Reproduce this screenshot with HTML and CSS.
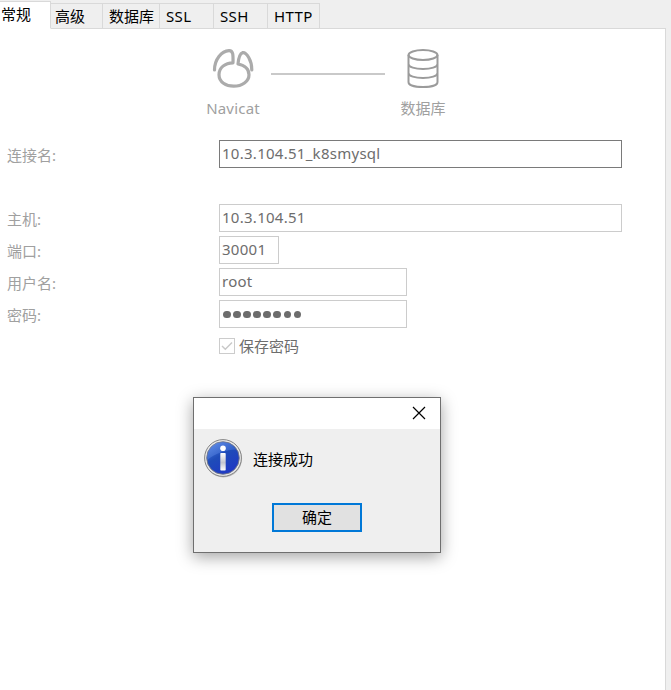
FILE: index.html
```html
<!DOCTYPE html>
<html lang="zh-CN">
<head>
<meta charset="utf-8">
<title>Navicat</title>
<link rel="stylesheet" href="styles.css">
</head>
<body>
<nav class="tabs">
  <div class="tab tab-active">常规</div>
  <div class="tab tab-advanced">高级</div>
  <div class="tab tab-database">数据库</div>
  <div class="tab tab-latin">SSL</div>
  <div class="tab tab-latin">SSH</div>
  <div class="tab tab-latin tab-http">HTTP</div>
</nav>
<main class="panel">
  <section class="route">
    <div class="endpoint endpoint-client">
      <svg width="44" height="42" viewBox="0 0 44 42" fill="none" stroke="#ababab" stroke-width="3.2" stroke-linecap="round" stroke-linejoin="round">
        <path d="M3.500 22C3.500 11.500 10.500 3 18 2.600C22.200 2.400 22.200 7 22 14.800C14 15 8 19.500 8 26.700C8 34 15 38.200 22.700 38.200C31 38.200 38 33.500 38 26.700C38 21.500 34 17.500 27 16C27.500 10.500 29 5.500 31.500 4.700C35.500 4 41 12.500 40.800 22"/>
      </svg>
      <span class="endpoint-name endpoint-latin">Navicat</span>
    </div>
    <div class="link"></div>
    <div class="endpoint endpoint-server">
      <svg width="32" height="42" viewBox="0 0 32 42" fill="none" stroke="#9b9b9b" stroke-width="2">
        <ellipse cx="16" cy="7" rx="14.5" ry="5"/>
        <path d="M1.5 7V34C1.5 37.2 8 39 16 39S30.500 37.200 30.500 34V7M1.500 16C1.500 19 8 21 16 21S30.500 19 30.500 16M1.500 25C1.500 28 8 30 16 30S30.500 28 30.500 25"/>
      </svg>
      <span class="endpoint-name">数据库</span>
    </div>
  </section>
  <form class="form">
    <div class="row row-name"><label class="label">连接名:</label><div class="field field-wide field-strong">10.3.104.51_k8smysql</div></div>
    <div class="row"><label class="label">主机:</label><div class="field field-wide">10.3.104.51</div></div>
    <div class="row"><label class="label">端口:</label><div class="field field-port">30001</div></div>
    <div class="row"><label class="label">用户名:</label><div class="field field-mid">root</div></div>
    <div class="row"><label class="label">密码:</label><div class="field field-mid field-password"><i class="dot"></i><i class="dot"></i><i class="dot"></i><i class="dot"></i><i class="dot"></i><i class="dot"></i><i class="dot"></i><i class="dot"></i></div></div>
    <div class="save">
      <span class="checkbox"><svg width="14" height="14" viewBox="0 0 14 14" fill="none" stroke="#c8c8c8" stroke-width="1.4"><path d="M2 7L5.300 10.300L12 3.500"/></svg></span>
      <span>保存密码</span>
    </div>
  </form>
</main>
<div class="dialog">
  <header class="dialog-bar">
    <svg width="14" height="14" viewBox="0 0 14 14" stroke="#000" stroke-width="1.200"><path d="M1 1L13 13M13 1L1 13"/></svg>
  </header>
  <div class="dialog-body">
    <div class="message">
      <svg width="40" height="40" viewBox="0 0 40 40">
        <defs>
          <linearGradient id="blue" x1="0" y1="0" x2=".6" y2="1"><stop offset="0" stop-color="#4f7fe4"/><stop offset=".5" stop-color="#1f4cb8"/><stop offset="1" stop-color="#2039c4"/></linearGradient>
          <linearGradient id="shine" x1="0" y1="0" x2="1" y2="1"><stop offset="0" stop-color="#7ba4f2"/><stop offset="1" stop-color="#2e5fce"/></linearGradient>
          <linearGradient id="stem" x1="0" y1="0" x2="0" y2="1"><stop offset="0" stop-color="#fff"/><stop offset=".55" stop-color="#c4c6cf"/><stop offset="1" stop-color="#fff"/></linearGradient>
        </defs>
        <circle cx="20.400" cy="20.700" r="18.700" fill="#999" opacity=".55"/>
        <circle cx="20" cy="20" r="18.400" fill="#e9e9e9" stroke="#858585" stroke-width="1"/>
        <circle cx="20" cy="20" r="16.300" fill="url(#blue)" stroke="#777b88" stroke-width=".9"/>
        <path d="M4.500 22A15.500 15.500 0 0 1 33 11.500C24 12 12 15 4.500 22Z" fill="url(#shine)" opacity=".5"/>
        <circle cx="20" cy="10.200" r="2.800" fill="#fff"/>
        <rect x="17.300" y="15" width="5.400" height="17.500" rx=".8" fill="url(#stem)"/>
      </svg>
      <span class="message-text">连接成功</span>
    </div>
    <button class="ok" type="button">确定</button>
  </div>
</div>
</body>
</html>
```

FILE: styles.css
```css
* { box-sizing: border-box; }
body {
  margin: 0;
  width: 671px;
  height: 690px;
  overflow: hidden;
  position: relative;
  background: #efefef;
  color: #000;
  font: 15px/20px "Noto Sans", "Noto Sans CJK SC", sans-serif;
  white-space: nowrap;
}
.tabs {
  display: flex;
  align-items: flex-end;
  height: 29px;
  position: relative;
}
.tab {
  height: 26px;
  padding: 2px 0 0 6px;
  border: solid #d9d9d9;
  border-width: 1px 1px 1px 0;
  width: 54px;
}
.tab-latin { letter-spacing: 0.35px; }
.tab-active {
  width: 51px;
  height: 28px;
  padding: 2px 0 0 1px;
  background: #fff;
  border-bottom-color: #fff;
}
.tab-advanced { width: 52px; padding-left: 4px; }
.tab-database { width: 57px; }
.tab-http { width: 52px; }
.panel {
  width: 666px;
  height: 662px;
  margin-top: -1px;
  background: #fff;
  border: solid #d9d9d9;
  border-width: 1px 1px 0 0;
}
.route {
  display: flex;
  padding: 19px 0 0 206px;
  height: 111px;
}
.endpoint {
  display: flex;
  flex-direction: column;
  align-items: center;
  gap: 8px;
  color: #a0a0a0;
}
.endpoint-client { width: 54px; }
.endpoint-server { width: 46px; margin-left: 15px; }
.endpoint-latin { letter-spacing: 0.2px; }
.link {
  width: 114px;
  height: 2px;
  margin: 25px 0 0 11px;
  background: #c9c9c9;
}
.form {
  display: flex;
  flex-direction: column;
  gap: 4px;
}
.row { display: flex; height: 28px; }
.row-name { margin-bottom: 32px; }
.label {
  width: 219px;
  padding: 5px 0 0 7px;
  color: #a0a0a0;
}
.field {
  height: 28px;
  padding: 2px 0 0 2px;
  border: 1px solid #ccc;
  color: #6d6d6d;
  letter-spacing: 0.27px;
}
.field-wide { width: 403px; }
.field-strong { border-color: #7a7a7a; }
.field-port { width: 60px; }
.field-mid { width: 188px; }
.field-password {
  display: flex;
  align-items: center;
  gap: 2.6px;
  padding: 1px 0 0 3px;
}
.dot {
  width: 7.5px;
  height: 7.5px;
  border-radius: 50%;
  background: #6d6d6d;
}
.save {
  display: flex;
  align-items: center;
  gap: 4px;
  padding-left: 219px;
  margin-top: 4px;
  color: #6d6d6d;
}
.checkbox {
  width: 16px;
  height: 16px;
  border: 1px solid #ccc;
}
.checkbox svg { display: block; }
.dialog {
  position: absolute;
  left: 193px;
  top: 397px;
  width: 248px;
  height: 156px;
  border: 1px solid #6f6f6f;
  background: #efefef;
  box-shadow: 0 4px 15px rgba(0, 0, 0, .36);
}
.dialog-bar {
  display: flex;
  justify-content: flex-end;
  height: 31px;
  padding: 8px 14px 0 0;
  background: #fff;
}
.dialog-body {
  display: flex;
  flex-direction: column;
  padding: 9px 0 0 9px;
}
.message {
  display: flex;
  align-items: center;
  gap: 10px;
  height: 40px;
}
.message-text { padding-top: 2px; }
.ok {
  width: 90px;
  height: 29px;
  margin: 25px 0 0 69px;
  padding: 0 0 2px;
  border: 2px solid #0078d7;
  background: #e1e1e1;
  color: #000;
  font: inherit;
}
```
